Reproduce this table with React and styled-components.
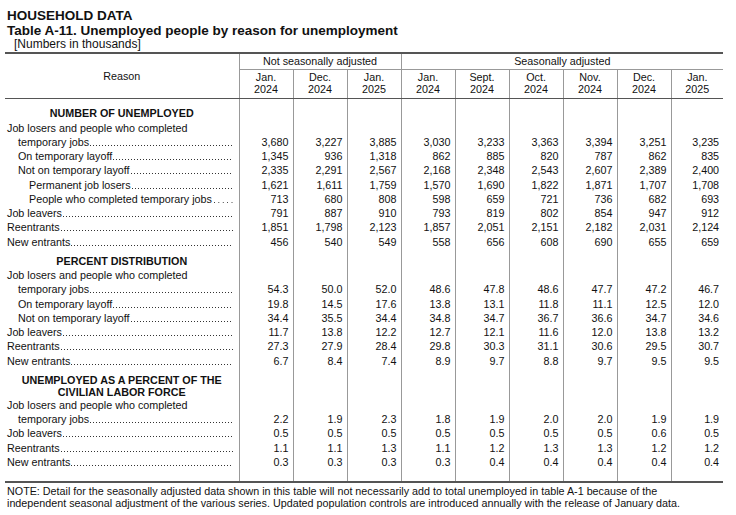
import React from 'react';
import styled, { createGlobalStyle } from 'styled-components';

const GlobalStyle = createGlobalStyle`
  body {
    margin: 0;
    background: #ffffff;
    color: #111111;
    font-family: "Liberation Sans", Arial, Helvetica, sans-serif;
  }
`;

const Page = styled.div`
  padding: 9px 0 0 5px;
  width: 736px;
  box-sizing: border-box;
`;

const Heading = styled.div`
  font-size: 13.5px;
  font-weight: 700;
  line-height: 14.5px;
  padding-left: 2px;
`;

const SubHeading = styled.div`
  font-size: 12px;
  line-height: 13px;
  padding-left: 9px;
`;

const Table = styled.table`
  width: 718px;
  table-layout: fixed;
  border-collapse: collapse;
  border-top: 2px solid #555555;
  border-bottom: 2px solid #555555;
  font-size: 10.75px;
  margin-top: 1px;
`;

const GroupHead = styled.th`
  font-weight: 400;
  line-height: 15px;
  padding: 0;
  text-align: center;
  border-left: 1px solid #999999;
  border-bottom: 1px solid #999999;
`;

const ReasonHead = styled.th`
  font-weight: 400;
  padding: 0 0 1px;
  text-align: center;
  vertical-align: middle;
  border-bottom: 1px solid #555555;
`;

const YearHead = styled.th`
  font-weight: 400;
  line-height: 11.5px;
  padding: 2px 0 3px;
  text-align: center;
  border-left: 1px solid #999999;
  border-bottom: 1px solid #555555;
`;

const LabelCell = styled.td`
  height: 14.25px;
  padding: 0 6px 0 ${p => 2 + (p.$indent || 0) * 11}px;
  line-height: 14px;
  vertical-align: bottom;
  white-space: nowrap;
  overflow: hidden;
`;

const SectionCell = styled.td`
  padding: 0 2px;
  vertical-align: bottom;
  font-weight: 700;
  text-align: center;
  white-space: nowrap;
`;

const SectionLine = styled.div`
  height: ${p => (p.$tight ? 12 : 14.25)}px;
  line-height: ${p => (p.$tight ? 12 : 14)}px;
`;

const NumCell = styled.td`
  height: 14.25px;
  padding: 0 4px 0 0;
  line-height: 14px;
  text-align: right;
  vertical-align: bottom;
  white-space: nowrap;
  border-left: 1px solid #999999;
`;

const SpacerCell = styled.td`
  height: ${p => p.$h}px;
  padding: 0;
  border-left: ${p => (p.$first ? 'none' : '1px solid #999999')};
`;

const Leader = styled.div`
  display: flex;
  align-items: flex-end;
`;

const Dots = styled.span`
  flex: 1;
  min-width: 0;
  height: 14px;
  background-image: linear-gradient(to right, #333333 1px, transparent 1px);
  background-size: ${p => (p.$spaced ? '4.4px' : '3px')} 1px;
  background-repeat: repeat-x;
  background-position: ${p => (p.$spaced ? '2px' : '1px')} 10px;
`;

const Note = styled.p`
  margin: 2px 0 0;
  padding-left: 2px;
  font-size: 10.75px;
  line-height: 12px;
`;

const months = [
  ['Jan.', '2024'], ['Dec.', '2024'], ['Jan.', '2025'],
  ['Jan.', '2024'], ['Sept.', '2024'], ['Oct.', '2024'],
  ['Nov.', '2024'], ['Dec.', '2024'], ['Jan.', '2025'],
];

const LOSERS = 'Job losers and people who completed';

const sections = [
  {
    title: ['NUMBER OF UNEMPLOYED'],
    top: 7,
    rows: [
      { label: LOSERS, lead: true },
      { label: 'temporary jobs', indent: 1, values: ['3,680', '3,227', '3,885', '3,030', '3,233', '3,363', '3,394', '3,251', '3,235'] },
      { label: 'On temporary layoff', indent: 1, values: ['1,345', '936', '1,318', '862', '885', '820', '787', '862', '835'] },
      { label: 'Not on temporary layoff', indent: 1, values: ['2,335', '2,291', '2,567', '2,168', '2,348', '2,543', '2,607', '2,389', '2,400'] },
      { label: 'Permanent job losers', indent: 2, values: ['1,621', '1,611', '1,759', '1,570', '1,690', '1,822', '1,871', '1,707', '1,708'] },
      { label: 'People who completed temporary jobs', indent: 2, spaced: true, values: ['713', '680', '808', '598', '659', '721', '736', '682', '693'] },
      { label: 'Job leavers', values: ['791', '887', '910', '793', '819', '802', '854', '947', '912'] },
      { label: 'Reentrants', values: ['1,851', '1,798', '2,123', '1,857', '2,051', '2,151', '2,182', '2,031', '2,124'] },
      { label: 'New entrants', values: ['456', '540', '549', '558', '656', '608', '690', '655', '659'] },
    ],
  },
  {
    title: ['PERCENT DISTRIBUTION'],
    top: 5,
    rows: [
      { label: LOSERS, lead: true },
      { label: 'temporary jobs', indent: 1, values: ['54.3', '50.0', '52.0', '48.6', '47.8', '48.6', '47.7', '47.2', '46.7'] },
      { label: 'On temporary layoff', indent: 1, values: ['19.8', '14.5', '17.6', '13.8', '13.1', '11.8', '11.1', '12.5', '12.0'] },
      { label: 'Not on temporary layoff', indent: 1, values: ['34.4', '35.5', '34.4', '34.8', '34.7', '36.7', '36.6', '34.7', '34.6'] },
      { label: 'Job leavers', values: ['11.7', '13.8', '12.2', '12.7', '12.1', '11.6', '12.0', '13.8', '13.2'] },
      { label: 'Reentrants', values: ['27.3', '27.9', '28.4', '29.8', '30.3', '31.1', '30.6', '29.5', '30.7'] },
      { label: 'New entrants', values: ['6.7', '8.4', '7.4', '8.9', '9.7', '8.8', '9.7', '9.5', '9.5'] },
    ],
  },
  {
    title: ['UNEMPLOYED AS A PERCENT OF THE', 'CIVILIAN LABOR FORCE'],
    top: 6,
    rows: [
      { label: LOSERS, lead: true },
      { label: 'temporary jobs', indent: 1, values: ['2.2', '1.9', '2.3', '1.8', '1.9', '2.0', '2.0', '1.9', '1.9'] },
      { label: 'Job leavers', values: ['0.5', '0.5', '0.5', '0.5', '0.5', '0.5', '0.5', '0.6', '0.5'] },
      { label: 'Reentrants', values: ['1.1', '1.1', '1.3', '1.1', '1.2', '1.3', '1.3', '1.2', '1.2'] },
      { label: 'New entrants', values: ['0.3', '0.3', '0.3', '0.3', '0.4', '0.4', '0.4', '0.4', '0.4'] },
    ],
  },
];

const SpacerRow = ({ h }) => (
  <tr>
    <SpacerCell $first $h={h} />
    {months.map((_, i) => <SpacerCell key={i} $h={h} />)}
  </tr>
);

const SectionRows = ({ section }) => {
  const tight = section.title.length > 1;
  return (
    <>
      <SpacerRow h={section.top} />
      <tr>
        <SectionCell>
          {section.title.map(t => <SectionLine key={t} $tight={tight}>{t}</SectionLine>)}
        </SectionCell>
        {months.map((_, i) => <NumCell key={i} />)}
      </tr>
      {section.rows.map(row => (
        <tr key={row.label}>
          <LabelCell $indent={row.indent}>
            {row.lead ? row.label : (
              <Leader>
                <span>{row.label}</span>
                <Dots $spaced={row.spaced} />
              </Leader>
            )}
          </LabelCell>
          {months.map((_, i) => <NumCell key={i}>{row.values ? row.values[i] : ''}</NumCell>)}
        </tr>
      ))}
    </>
  );
};

export default function App() {
  return (
    <Page>
      <GlobalStyle />
      <Heading>HOUSEHOLD DATA</Heading>
      <Heading>Table A-11. Unemployed people by reason for unemployment</Heading>
      <SubHeading>[Numbers in thousands]</SubHeading>
      <Table>
        <colgroup>
          <col style={{ width: 234 }} />
          {months.map((_, i) => <col key={i} style={{ width: i === 8 ? 52 : 54 }} />)}
        </colgroup>
        <thead>
          <tr>
            <ReasonHead rowSpan={2}>Reason</ReasonHead>
            <GroupHead colSpan={3}>Not seasonally adjusted</GroupHead>
            <GroupHead colSpan={6}>Seasonally adjusted</GroupHead>
          </tr>
          <tr>
            {months.map(([m, y], i) => (
              <YearHead key={i}>{m}<br />{y}</YearHead>
            ))}
          </tr>
        </thead>
        <tbody>
          {sections.map(s => <SectionRows key={s.title[0]} section={s} />)}
          <SpacerRow h={12} />
        </tbody>
      </Table>
      <Note>
        NOTE: Detail for the seasonally adjusted data shown in this table will not necessarily add to total unemployed in table A-1 because of the
        <br />
        independent seasonal adjustment of the various series. Updated population controls are introduced annually with the release of January data.
      </Note>
    </Page>
  );
}
